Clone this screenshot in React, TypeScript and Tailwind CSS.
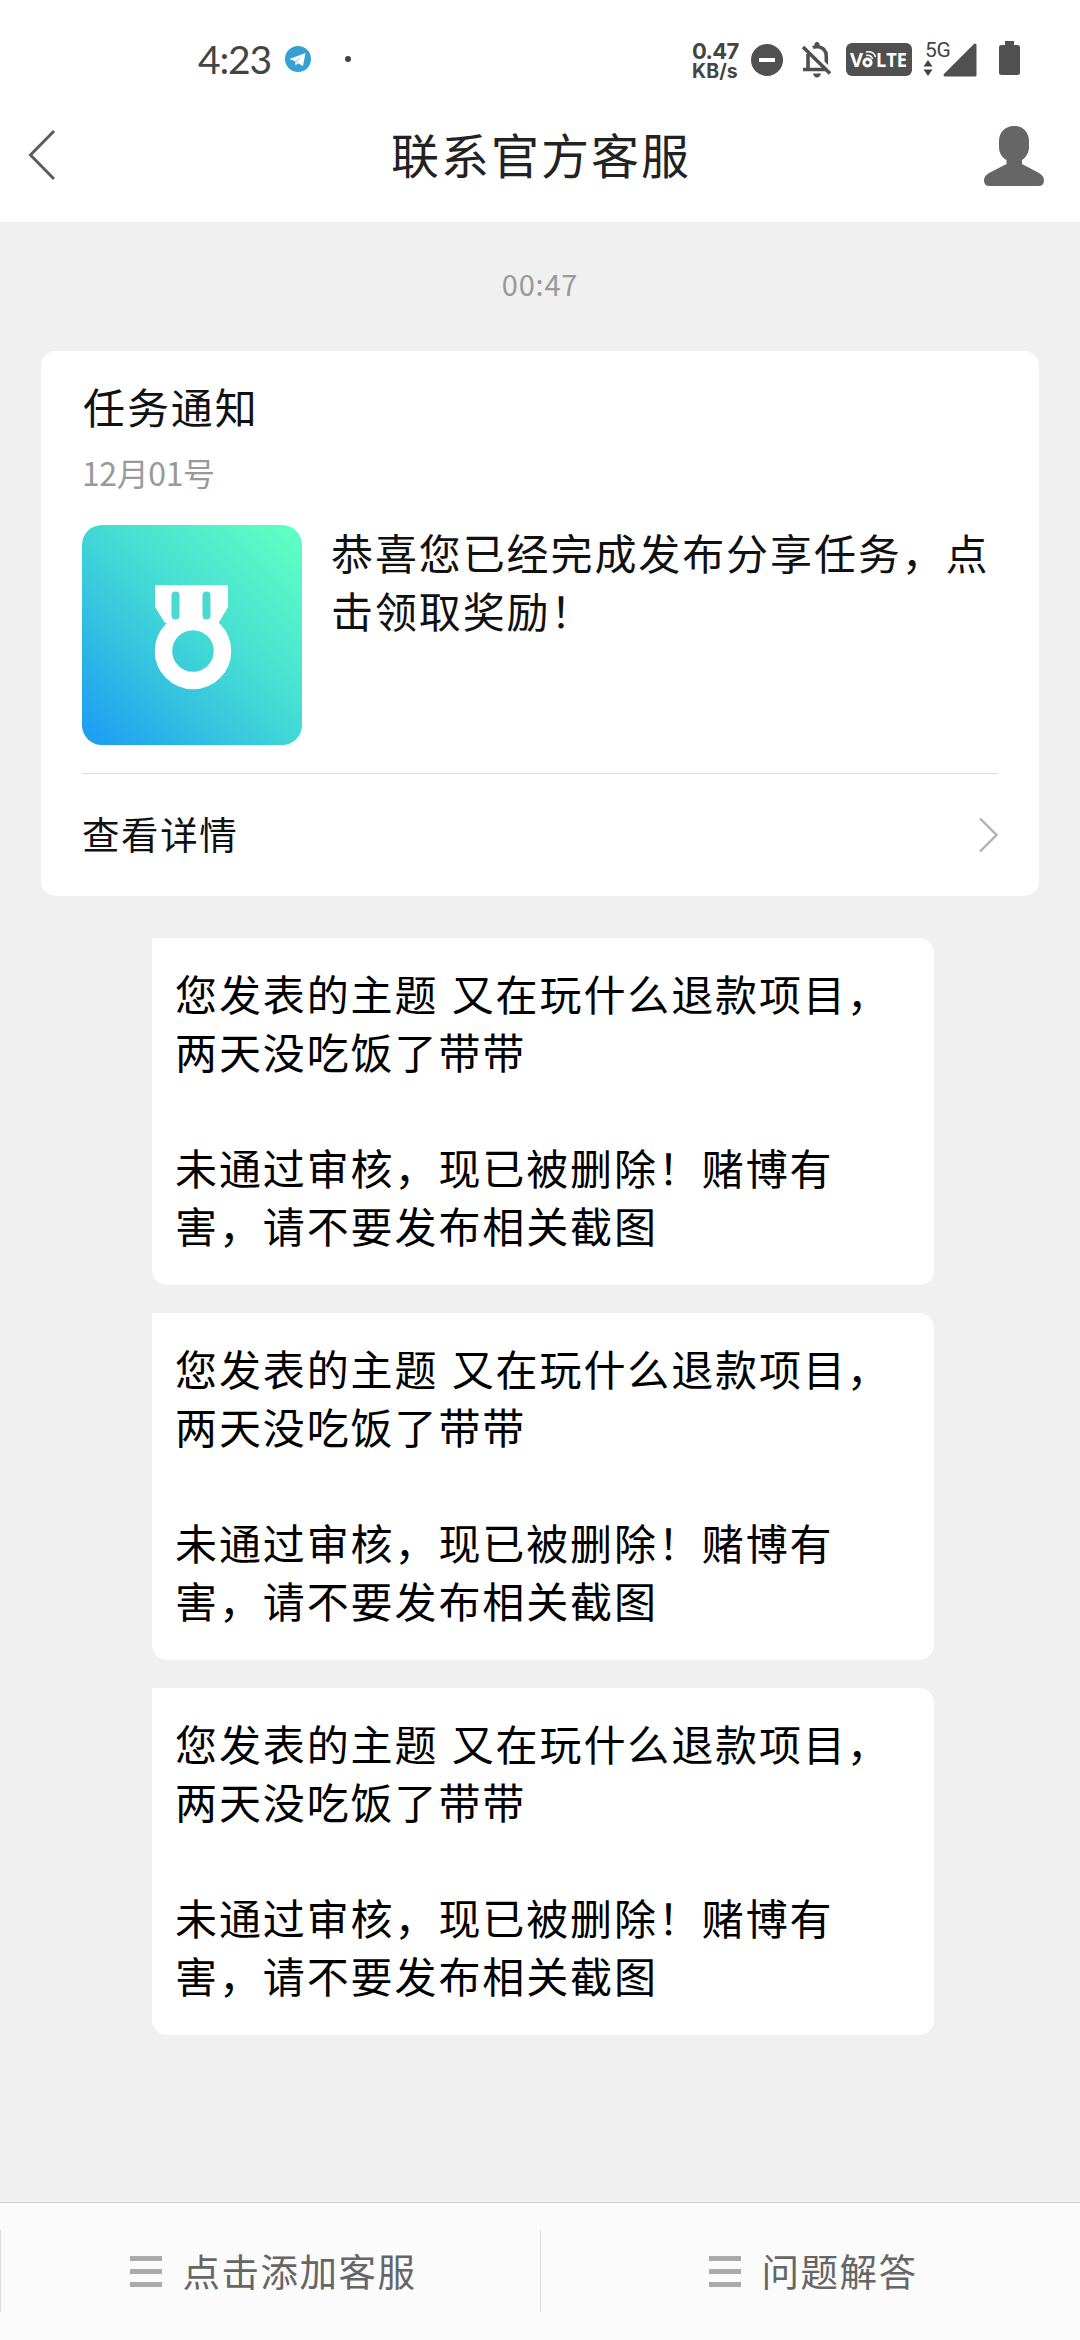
import type { ReactNode } from "react";

const messages = [
  { id: 1, topic: "又在玩什么退款项目，\n两天没吃饭了带带" },
  { id: 2, topic: "又在玩什么退款项目，\n两天没吃饭了带带" },
  { id: 3, topic: "又在玩什么退款项目，\n两天没吃饭了带带" },
];

export default function App() {
  return (
    <div
      lang="zh-CN"
      className="flex flex-col w-[1080px] h-[2340px] overflow-hidden bg-[#f0f0f0] text-black font-['Noto_Sans_CJK_SC',sans-serif]"
    >
      <StatusBar />
      <Header />
      <main className="flex-1 flex flex-col">
        <div className="mt-10 mb-0.5 h-[42px] text-center text-[29px] leading-[42px] tracking-[0.8px] text-[#999]">
          00:47
        </div>
        <TaskCard />
        <div className="mt-[42px] ml-[152px] flex flex-col gap-7">
          {messages.map((message) => (
            <Bubble key={message.id}>
              {`您发表的主题 ${message.topic}\n\n未通过审核，现已被删除！赌博有\n害，请不要发布相关截图`}
            </Bubble>
          ))}
        </div>
      </main>
      <BottomMenu />
    </div>
  );
}

function StatusBar() {
  return (
    <div className="h-[120px] shrink-0 flex items-start bg-white pt-[35px] pl-[198px] text-[#444]">
      <div className="w-[73px] h-12 text-[39px] leading-12 whitespace-nowrap font-[Lato,sans-serif] tracking-[-1.2px]">
        4:23
      </div>
      <svg className="mt-[11px] ml-[14px]" width="26" height="26" viewBox="0 0 26 26">
        <circle cx="13" cy="13" r="13" fill="#35a0d4" />
        <path d="M4.5 13 L20.5 7 L18 20 L13 17.2 L10.5 19.5 L10 15.2 Z" fill="#fff" />
        <path d="M10 15.2 L17 10 L12 16 L10.5 19.5 Z" fill="#b5d8ea" />
      </svg>
      <div className="mt-[21px] ml-[34px] size-1.5 rounded-full bg-[#444]" />
      <div className="ml-[341px] mt-[6px] w-[50px] whitespace-nowrap font-bold font-[Inter,sans-serif]">
        <div className="text-[22px] leading-[20px] tracking-[-0.6px]">0.47</div>
        <div className="text-[19.5px] leading-[20px] tracking-[0.1px]">KB/s</div>
      </div>
      <svg className="ml-[9px] mt-[9px]" width="32" height="32" viewBox="0 0 32 32">
        <circle cx="16" cy="16" r="16" fill="#505050" />
        <rect x="8" y="14" width="16" height="4" fill="#fff" />
      </svg>
      <BellOffIcon />
      <div className="ml-[13px] mt-2 flex h-[33px] w-[66px] items-center justify-center rounded-[6px] bg-[#505050]">
        <svg width="60" height="27" viewBox="0 0 60 27">
          <g fill="#fff" fontFamily="Open Sans, sans-serif" fontWeight="700">
            <text x="1" y="21" fontSize="20" textLength="13" lengthAdjust="spacingAndGlyphs">V</text>
            <text x="27" y="21" fontSize="20" textLength="31" lengthAdjust="spacingAndGlyphs">LTE</text>
          </g>
          <g fill="none" stroke="#fff">
            <circle cx="18.5" cy="16.5" r="3.6" strokeWidth="3" />
            <path d="M17 9.500 Q22 8.500 23.500 13" strokeWidth="1.500" />
            <path d="M17 6 Q25 5 26.500 11" strokeWidth="1.500" />
          </g>
        </svg>
      </div>
      <div className="ml-[11px] mt-[5px] w-[20px] whitespace-nowrap">
        <div className="pl-[2px] h-[20px] text-[21px] leading-[20px] tracking-[-0.3px] font-[Roboto,sans-serif]">
          5G
        </div>
        <svg width="10" height="16" viewBox="0 0 10 16" fill="#444">
          <path d="M5 0 L9.500 6.500 H0.500 Z M0.500 9.500 H9.500 L5 16 Z" />
        </svg>
      </div>
      <svg className="mt-[8px]" width="34" height="34" viewBox="0 0 34 34">
        <path d="M2 32 L32 2 V32 Z" fill="#505050" stroke="#505050" strokeWidth="3" strokeLinejoin="round" />
      </svg>
      <svg className="ml-[22px] mt-[6px]" width="21" height="35" viewBox="0 0 21 35">
        <path d="M6 0 H15 V4 H18.500 Q21 4 21 6.500 V32 Q21 34 18.500 34 H2.500 Q0 34 0 32 V6.500 Q0 4 2.500 4 H6 Z" fill="#505050" />
      </svg>
    </div>
  );
}

function BellOffIcon() {
  return (
    <svg className="ml-[18px] mt-[6px]" width="32" height="37" viewBox="0 0 32 37">
      <path
        d="M12 6.800 Q14 5.500 16 5.500 Q25 6.500 25.300 15 V25 M7 13 V27.500 M2 28.500 H25"
        fill="none"
        stroke="#505050"
        strokeWidth="3.600"
      />
      <path d="M13.500 5 V2.500 Q16 -1 18.500 2.500 V5 Z M12 32.500 H20 Q19 36.500 16 36.500 Q13 36.500 12 32.500 Z" fill="#505050" />
      <path d="M4.500 3.500 L32 31" stroke="#fff" strokeWidth="3" />
      <path d="M2 6 L29 32.500" stroke="#505050" strokeWidth="3.600" />
    </svg>
  );
}

function Header() {
  return (
    <header className="h-[102px] shrink-0 flex items-start justify-between bg-white pl-[28px] pr-[36px]">
      <svg className="mt-[9px]" width="60" height="52" viewBox="0 0 60 52">
        <path d="M26 2 L2.500 26 L26 50" fill="none" stroke="#5c5c5c" strokeWidth="3" />
      </svg>
      <h1 className="-mt-[2px] -mr-[10px] text-[48px] leading-[70px] tracking-[2px] text-[#222]">
        联系官方客服
      </h1>
      <svg className="mt-[6px]" width="60" height="60" viewBox="0 0 60 60">
        <path
          d="M30 0 C39 0 45 6.500 45 15 V21 C45 27 42 31.500 38 34 V38 L55 47 C59 49.500 60 52 60 55 Q59.500 60 55 60 H5 Q0.500 60 0 55 C0 52 1 49.500 5 47 L22.500 38 V34 C18 31.500 15 27 15 21 V15 C15 6.500 21 0 30 0 Z"
          fill="#666"
        />
      </svg>
    </header>
  );
}

function TaskCard() {
  return (
    <section className="mt-[45px] mx-[41px] h-[545px] flex flex-col rounded-[15px] bg-white px-[41px]">
      <h2 className="mt-[25px] pl-px text-[42px] leading-[60px] tracking-[1.9px] text-[#111]">
        任务通知
      </h2>
      <div className="mt-[13px] text-[32px] leading-[46px] tracking-[-0.4px] text-[#999]">
        12月01号
      </div>
      <div className="mt-[30px] flex">
        <MedalImage />
        <p className="-mt-[2px] ml-[29px] text-[42px] leading-[58px] tracking-[1.9px] text-[#111] whitespace-nowrap">
          恭喜您已经完成发布分享任务，点
          <br />
          击领取奖励！
        </p>
      </div>
      <div className="mt-[28px] h-px shrink-0 bg-[#e0e0e0]" />
      <div className="flex-1 flex items-center justify-between text-[#111]">
        <span className="pb-1 text-[37.5px] tracking-[1.6px]">查看详情</span>
        <svg width="20" height="36" viewBox="0 0 20 36">
          <path d="M2 1.500 L18.500 18 L2 34.500" fill="none" stroke="#b2b2b2" strokeWidth="2.400" />
        </svg>
      </div>
    </section>
  );
}

function MedalImage() {
  return (
    <div className="size-[220px] shrink-0 rounded-[20px] bg-[linear-gradient(45deg,#1e9ff2_4%,#3dd2d8_45%,#49e1d2_60%,#5effc3_96%)]">
      <svg width="220" height="220" viewBox="0 0 220 220">
        <path d="M73 60 H146 V82 L136.500 98 H83 L73 82 Z" fill="#fff" />
        <circle cx="111" cy="126" r="29.500" fill="none" stroke="#fff" strokeWidth="17.500" />
        <path d="M93.500 70.500 V90.500 M124.500 70.500 V90.500" stroke="#4ad9d3" strokeWidth="8" strokeLinecap="round" />
      </svg>
    </div>
  );
}

function Bubble({ children }: { children: ReactNode }) {
  return (
    <div className="w-[782px] h-[347px] rounded-[15px] rounded-tl-none bg-white pt-[26px] pl-[23px] text-[42px] leading-[58px] tracking-[1.9px] [word-spacing:2px] whitespace-pre">
      {children}
    </div>
  );
}

function BottomMenu() {
  return (
    <nav className="h-[138px] shrink-0 flex items-start border-t border-[#ccc] bg-[#fbfbfb] pt-[27px]">
      <MenuItem label="点击添加客服" />
      <MenuItem label="问题解答" />
    </nav>
  );
}

function MenuItem({ label }: { label: string }) {
  return (
    <div className="flex-1 h-[82px] flex items-center justify-center border-l border-[#ddd] pl-[5px] text-[#666]">
      <div className="mr-[21px] flex flex-col gap-2">
        <div className="h-[5px] w-8 bg-[#aaa]" />
        <div className="h-[5px] w-8 bg-[#aaa]" />
        <div className="h-[5px] w-8 bg-[#aaa]" />
      </div>
      <span className="pb-[3px] text-[37.5px] leading-[54px] tracking-[1.5px]">{label}</span>
    </div>
  );
}
